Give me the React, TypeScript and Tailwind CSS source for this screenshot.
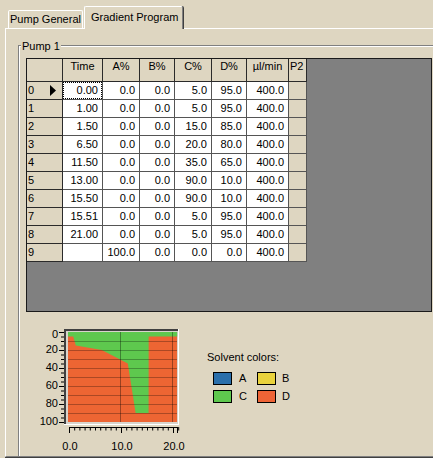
import React from "react";

const rows: string[][] = [
  ["0.00", "0.0", "0.0", "5.0", "95.0", "400.0"],
  ["1.00", "0.0", "0.0", "5.0", "95.0", "400.0"],
  ["1.50", "0.0", "0.0", "15.0", "85.0", "400.0"],
  ["6.50", "0.0", "0.0", "20.0", "80.0", "400.0"],
  ["11.50", "0.0", "0.0", "35.0", "65.0", "400.0"],
  ["13.00", "0.0", "0.0", "90.0", "10.0", "400.0"],
  ["15.50", "0.0", "0.0", "90.0", "10.0", "400.0"],
  ["15.51", "0.0", "0.0", "5.0", "95.0", "400.0"],
  ["21.00", "0.0", "0.0", "5.0", "95.0", "400.0"],
  ["", "100.0", "0.0", "0.0", "0.0", "400.0"],
];

const colW = ["w-[40px]", "w-[37px]", "w-[35px]", "w-[37px]", "w-[35px]", "w-[42px]"];
const heads = ["Time", "A%", "B%", "C%", "D%", "µl/min"];

function Grid() {
  return (
    <div className="ml-[6px] mt-[11px] w-[406px] h-[254px] border border-[#1a1a1a] bg-[#808080] flex flex-col">
      <div className="flex h-[23px] shrink-0">
        <div className="w-[36px] h-full bg-[#ded6c1] border-r border-b border-[#2a2a2a]" />
        {heads.map((h, i) => (
          <div
            key={h}
            className={`${colW[i]} h-full bg-[#ded6c1] border-r border-b border-[#2a2a2a] flex justify-center items-start pt-[1px]`}
          >
            {h}
          </div>
        ))}
        <div className="w-[18px] h-full bg-[#ded6c1] border-r border-b border-[#2a2a2a] pl-[1px] pt-[1px]">P2</div>
      </div>
      {rows.map((r, ri) => (
        <div key={ri} className="flex h-[18px] shrink-0">
          <div className="w-[36px] h-full bg-[#ded6c1] border-r border-b border-[#2a2a2a] pl-[1px] flex items-center justify-between">
            <span>{ri}</span>
            {ri === 0 && (
              <svg width="6" height="11" viewBox="0 0 6 11" className="mr-[6px]">
                <polygon points="0,0 6,5.5 0,11" fill="#000" />
              </svg>
            )}
          </div>
          {r.map((c, ci) => (
            <div
              key={ci}
              className={`${colW[ci]} h-full bg-white border-r border-b border-[#555555] flex`}
            >
              <div
                className={`flex-1 flex items-center justify-end pr-[3px] ${
                  ri === 0 && ci === 0 ? "border border-dotted border-black" : "border border-transparent"
                }`}
              >
                {c}
              </div>
            </div>
          ))}
          <div className="w-[18px] h-full bg-[#ded6c1] border-r border-b border-[#555555]" />
        </div>
      ))}
    </div>
  );
}

function Chart() {
  const X = (t: number) => 32 + t * 5.2;
  const Y = (v: number) => 7 + v * 0.9;
  const pts: [number, number][] = [
    [0, 5],
    [1, 5],
    [1.5, 15],
    [6.5, 20],
    [11.5, 35],
    [13, 90],
    [15.5, 90],
    [15.51, 5],
    [21, 5],
  ];
  const poly = [
    `${X(0)},${Y(0)}`,
    ...pts.map(([t, v]) => `${X(t)},${Y(v)}`),
    `${X(21)},${Y(0)}`,
  ].join(" ");
  const yMinor: number[] = [];
  for (let v = 0; v <= 100; v += 5) yMinor.push(v);
  const xMinor: number[] = [];
  for (let t = 0; t <= 21; t += 1) xMinor.push(t);
  const yLabels = [0, 20, 40, 60, 80, 100];
  const yLabelPos = [10, 25.5, 43.5, 61.5, 79.5, 97];
  return (
    <svg width="150" height="130" viewBox="0 0 150 130" className="shrink-0">
      <rect x="28" y="4" width="115" height="96" fill="#ffffff" />
      <rect x="28" y="4" width="114" height="95" fill="#404040" />
      <rect x="30" y="6" width="112" height="93" fill="#d8d4cc" />
      <rect x="32" y="7" width="109" height="90" fill="#ed6533" />
      <polygon points={poly} fill="#5ec84e" />
      {[1, 2, 3, 4, 5, 6, 7, 8, 9].map((k) => (
        <line key={k} x1="32" x2="141" y1={Y(k * 10) + 0.5} y2={Y(k * 10) + 0.5} stroke="#000" strokeOpacity="0.28" strokeWidth="1" />
      ))}
      {[10, 20].map((t) => (
        <line key={t} x1={X(t) + 0.5} x2={X(t) + 0.5} y1="7" y2="97" stroke="#000" strokeOpacity="0.35" strokeWidth="1" />
      ))}
      {yMinor.map((v) => (
        <line
          key={v}
          x1={v % 20 === 0 ? 23 : 25}
          x2="28"
          y1={Y(v) + 0.5}
          y2={Y(v) + 0.5}
          stroke="#000"
          strokeWidth="1"
        />
      ))}
      {yLabels.map((v, i) => (
        <text
          key={v}
          x="22"
          y={yLabelPos[i]}
          textAnchor="end"
          dominantBaseline="middle"
          fontFamily="'Liberation Sans', Arial, sans-serif"
          fontSize="11"
          fill="#000"
        >
          {v}
        </text>
      ))}
      <line x1="33" x2="142" y1="102.5" y2="102.5" stroke="#000" strokeWidth="1" />
      {xMinor.map((t) => (
        <line
          key={t}
          x1={X(t) + 1.5}
          x2={X(t) + 1.5}
          y1="102"
          y2={t % 10 === 0 ? 108 : 105.5}
          stroke="#000"
          strokeWidth="1"
        />
      ))}
      <line x1="141.5" x2="141.5" y1="102" y2="108" stroke="#000" strokeWidth="1" />
      {[0, 10, 20].map((t) => (
        <text
          key={t}
          x={X(t) + 2}
          y="122"
          textAnchor="middle"
          dominantBaseline="middle"
          fontFamily="'Liberation Sans', Arial, sans-serif"
          fontSize="11"
          fill="#000"
        >
          {t.toFixed(1)}
        </text>
      ))}
    </svg>
  );
}

function Swatch({ color }: { color: string }) {
  return <div className={`w-[19px] h-[13px] border border-black ${color}`} />;
}

function Legend() {
  return (
    <div className="ml-[21px] mt-[26px] flex flex-col">
      <div className="h-[13px]">Solvent colors:</div>
      <div className="mt-[8px] ml-[6px] flex flex-col gap-[5px]">
        <div className="flex items-center h-[13px]">
          <Swatch color="bg-[#2a6fab]" />
          <span className="ml-[7px] w-[18px]">A</span>
          <Swatch color="bg-[#e9d23c]" />
          <span className="ml-[6px]">B</span>
        </div>
        <div className="flex items-center h-[13px]">
          <Swatch color="bg-[#5ec84e]" />
          <span className="ml-[7px] w-[18px]">C</span>
          <Swatch color="bg-[#ee6436]" />
          <span className="ml-[6px]">D</span>
        </div>
      </div>
    </div>
  );
}

export default function App() {
  return (
    <div className="w-[433px] h-[458px] overflow-hidden bg-[#ded6c1] text-black text-[11px] leading-[13px] font-['Liberation_Sans',Arial,sans-serif] select-none">
      <div className="relative z-10 flex items-end h-[28px] pl-[8px]">
        <div className="w-[75px] h-[18px] border-t border-l border-r border-white rounded-t-[2px] flex items-center justify-center">
          Pump General
        </div>
        <div className="ml-[1px] w-[99px] h-[23px] -mb-[1px] bg-[#ded6c1] border-t border-l border-white rounded-t-[2px] shadow-[1px_0_0_#404040] border-r border-r-[#808080] flex items-start pt-[4px] pl-[6px]">
          Gradient Program
        </div>
      </div>
      <div className="ml-[5px] w-[460px] h-[429px] border-t border-l border-white border-b border-b-[#808080] shadow-[0_1px_0_#404040] overflow-hidden">
        <div className="relative ml-[12px] mt-[16px] w-[460px] h-[460px] border-t border-l border-[#808080] shadow-[inset_1px_1px_0_#ffffff] pt-[1px] pl-[1px]">
          <span className="absolute left-[2px] top-[-6px] px-[1px] bg-[#ded6c1] leading-[13px]">Pump 1</span>
          <Grid />
          <div className="flex mt-[13px] ml-[16px]">
            <Chart />
            <Legend />
          </div>
        </div>
      </div>
    </div>
  );
}
